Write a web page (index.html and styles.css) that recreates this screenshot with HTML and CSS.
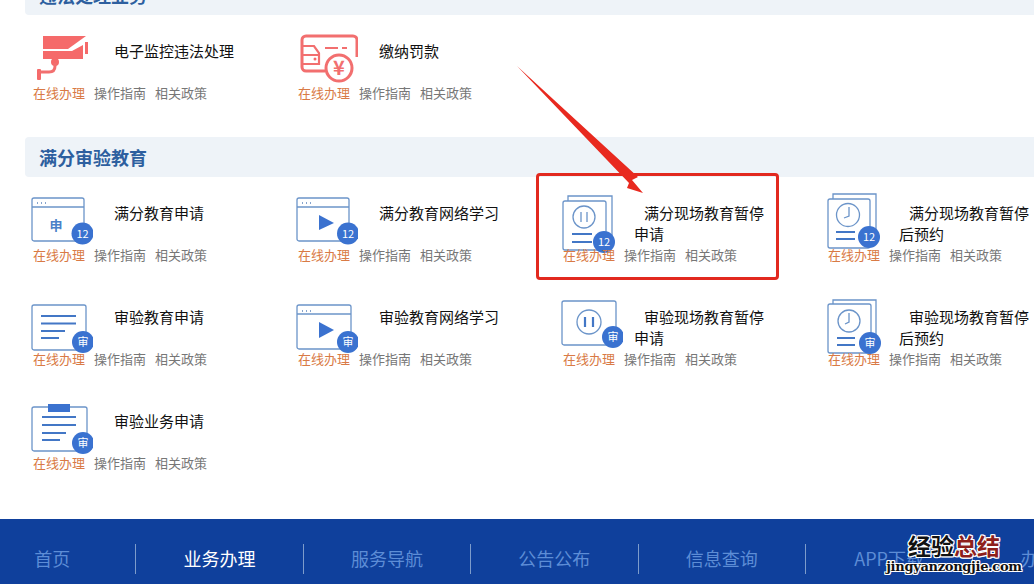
FILE: index.html
```html
<!DOCTYPE html>
<html lang="zh-CN">
<head>
<meta charset="utf-8">
<title>满分审验教育</title>
<link rel="stylesheet" href="styles.css">
</head>
<body>
<div class="page">
  <main class="content">
    <section class="section">
      <h2 class="section-title">违法处理业务</h2>
      <div class="items">
        <article class="item">
          <svg class="icon" viewBox="0 0 63 60">
            <g class="coral">
              <polygon points="13,5 56,5 38,18 13,18"/>
              <polygon points="13,20 42,20 53,14 53,28 13,28"/>
              <rect x="55" y="11" width="3" height="12"/>
              <circle cx="25" cy="31" r="4"/>
              <rect x="7" y="38" width="4" height="11" rx="1"/>
            </g>
            <path class="coral-line" d="M25 32V35Q25 41 19 41H9"/>
          </svg>
          <h3 class="item-title">电子监控违法处理</h3>
          <p class="links"><a class="online">在线办理</a><a>操作指南</a><a>相关政策</a></p>
        </article>
        <article class="item">
          <svg class="icon" viewBox="0 0 63 60">
            <path class="coral-line" d="M30 40H11a4 4 0 0 1-4-4V9a4 4 0 0 1 4-4H58a4 4 0 0 1 4 4V26"/>
            <path class="coral-line thin" d="M8 15H19L24 22V33H8M8 24H24M30 17H43M47 17H52"/>
            <circle class="coral" cx="20" cy="28" r="1.5"/>
            <circle class="coral-line" cx="44" cy="37" r="13"/>
            <text class="yen" x="44" y="44">¥</text>
          </svg>
          <h3 class="item-title">缴纳罚款</h3>
          <p class="links"><a class="online">在线办理</a><a>操作指南</a><a>相关政策</a></p>
        </article>
      </div>
    </section>

    <section class="section">
      <h2 class="section-title">满分审验教育</h2>
      <div class="items">
        <article class="item">
          <svg class="icon" viewBox="0 0 63 60">
            <rect class="line" x="2" y="5" width="52" height="43" rx="2"/>
            <path class="line" d="M2 14H54"/>
            <path class="dots" d="M7 10h1M11 10h1M15 10h1"/>
            <text class="shen" x="26" y="37">申</text>
            <circle class="badge" cx="52.500" cy="40.500" r="11"/>
            <text class="badge-text" x="52.500" y="44.500">12</text>
          </svg>
          <h3 class="item-title">满分教育申请</h3>
          <p class="links"><a class="online">在线办理</a><a>操作指南</a><a>相关政策</a></p>
        </article>
        <article class="item">
          <svg class="icon" viewBox="0 0 63 60">
            <rect class="line" x="2" y="5" width="52" height="43" rx="2"/>
            <path class="line" d="M2 14H54"/>
            <path class="dots" d="M7 10h1M11 10h1M15 10h1"/>
            <polygon class="solid" points="24,22 39,30 24,37"/>
            <circle class="badge" cx="53" cy="40.500" r="11"/>
            <text class="badge-text" x="53" y="44.500">12</text>
          </svg>
          <h3 class="item-title">满分教育网络学习</h3>
          <p class="links"><a class="online">在线办理</a><a>操作指南</a><a>相关政策</a></p>
        </article>
        <article class="item">
          <svg class="icon" viewBox="0 0 63 60">
            <path class="line" d="M8 8V3H52V48H46"/>
            <rect class="line paper" x="3" y="8" width="43" height="49" rx="2"/>
            <circle class="line" cx="24" cy="24" r="11"/>
            <path class="line" d="M21 19V29M27 19V29"/>
            <path class="bars" d="M12 41H32M12 49H32"/>
            <circle class="badge" cx="44" cy="49" r="11"/>
            <text class="badge-text" x="44" y="53">12</text>
          </svg>
          <h3 class="item-title">满分现场教育暂停申请</h3>
          <p class="links"><a class="online">在线办理</a><a>操作指南</a><a>相关政策</a></p>
        </article>
        <article class="item">
          <svg class="icon" viewBox="0 0 63 60">
            <path class="line" d="M8 6V1H51V46H45"/>
            <rect class="line paper" x="3" y="6" width="42" height="49" rx="2"/>
            <circle class="line" cx="23" cy="22" r="11.500"/>
            <path class="line" d="M24 14V23L19 25"/>
            <path class="bars" d="M11 39H30M11 46H30"/>
            <circle class="badge" cx="44" cy="44" r="11"/>
            <text class="badge-text" x="44" y="48">12</text>
          </svg>
          <h3 class="item-title">满分现场教育暂停后预约</h3>
          <p class="links"><a class="online">在线办理</a><a>操作指南</a><a>相关政策</a></p>
        </article>

        <article class="item">
          <svg class="icon" viewBox="0 0 63 60">
            <rect class="line" x="2" y="8" width="54" height="45" rx="2"/>
            <path class="bars" d="M11 19H46M11 26.500H46M11 34H35M11 41H29"/>
            <circle class="badge" cx="53" cy="45" r="11"/>
            <text class="badge-text" x="53" y="49">审</text>
          </svg>
          <h3 class="item-title">审验教育申请</h3>
          <p class="links"><a class="online">在线办理</a><a>操作指南</a><a>相关政策</a></p>
        </article>
        <article class="item">
          <svg class="icon" viewBox="0 0 63 60">
            <rect class="line" x="2" y="8" width="54" height="44" rx="2"/>
            <path class="line" d="M2 17H56"/>
            <path class="dots" d="M7 14h1M11 14h1M15 14h1"/>
            <polygon class="solid" points="24,25 39,33 24,41"/>
            <circle class="badge" cx="53" cy="45" r="11"/>
            <text class="badge-text" x="53" y="49">审</text>
          </svg>
          <h3 class="item-title">审验教育网络学习</h3>
          <p class="links"><a class="online">在线办理</a><a>操作指南</a><a>相关政策</a></p>
        </article>
        <article class="item">
          <svg class="icon" viewBox="0 0 63 60">
            <rect class="line" x="2" y="4" width="54" height="44" rx="2"/>
            <circle class="line" cx="29" cy="25" r="12"/>
            <path class="bars" d="M25 20V30M33 20V30"/>
            <circle class="badge" cx="53" cy="40" r="11"/>
            <text class="badge-text" x="53" y="44">审</text>
          </svg>
          <h3 class="item-title">审验现场教育暂停申请</h3>
          <p class="links"><a class="online">在线办理</a><a>操作指南</a><a>相关政策</a></p>
        </article>
        <article class="item">
          <svg class="icon" viewBox="0 0 63 60">
            <path class="line" d="M8 7V3H51V48H46"/>
            <rect class="line paper" x="3" y="7" width="43" height="49" rx="2"/>
            <circle class="line" cx="24" cy="24" r="11"/>
            <path class="line" d="M24 16V25L20 27"/>
            <path class="bars" d="M12 41H30M12 48H30"/>
            <circle class="badge" cx="45" cy="46" r="11"/>
            <text class="badge-text" x="45" y="50">审</text>
          </svg>
          <h3 class="item-title">审验现场教育暂停后预约</h3>
          <p class="links"><a class="online">在线办理</a><a>操作指南</a><a>相关政策</a></p>
        </article>

        <article class="item">
          <svg class="icon" viewBox="0 0 63 60">
            <rect class="line" x="2" y="6" width="55" height="44" rx="2"/>
            <rect class="solid" x="18" y="3" width="22" height="8"/>
            <path class="bars" d="M12 16H46M12 24H46M12 32H36M12 39H30"/>
            <circle class="badge" cx="53" cy="42" r="11"/>
            <text class="badge-text" x="53" y="46">审</text>
          </svg>
          <h3 class="item-title">审验业务申请</h3>
          <p class="links"><a class="online">在线办理</a><a>操作指南</a><a>相关政策</a></p>
        </article>
      </div>
    </section>
  </main>

  <footer class="footer">
    <nav class="nav">
      <a class="nav-item">首页</a>
      <a class="nav-item active">业务办理</a>
      <a class="nav-item">服务导航</a>
      <a class="nav-item">公告公布</a>
      <a class="nav-item">信息查询</a>
      <a class="nav-item">APP下载</a>
      <a class="nav-item">办事指南</a>
    </nav>
  </footer>

  <div class="callout-box"></div>
  <svg class="callout-arrow" viewBox="0 0 140 140">
    <polygon points="2,1 123,112 117,115 128,128 112,123 114,118"/>
  </svg>
  <div class="watermark">
    <div class="wm-cn"><span>经验</span><span class="wm-red">总结</span></div>
    <div class="wm-en">jingyanzongjie.com</div>
  </div>
</div>
</body>
</html>
```
FILE: styles.css
```css
html, body {
  margin: 0;
  height: 584px;
  overflow: hidden;
  background: #fff;
}
.page {
  position: relative;
  height: 584px;
  overflow: hidden;
  font-family: "Noto Sans CJK SC", "Liberation Sans", sans-serif;
}
.content {
  margin-top: -25px;
  padding-left: 25px;
}
.section {
  margin-bottom: 34px;
}
.section:last-child {
  margin-bottom: 46px;
}
.section-title {
  margin: 0;
  height: 40px;
  padding-left: 14px;
  font-size: 18px;
  font-weight: 700;
  line-height: 40px;
  color: #2d5f9f;
  background: #eef3f8;
  border-radius: 4px 0 0 4px;
}
.items {
  display: grid;
  grid-template-columns: repeat(4, 265px);
  row-gap: 42px;
  padding: 26px 0 0 7px;
}
.item {
  display: grid;
  grid-template-columns: 72px 135px;
  grid-template-rows: 42px 20px;
}
.icon {
  grid-column: 1;
  grid-row: 1;
  width: 63px;
  height: 60px;
  margin: -10px 0 0 -2px;
  z-index: 1;
}
.item-title {
  grid-column: 2;
  grid-row: 1;
  margin: -1px 0 0;
  font-size: 15px;
  font-weight: 400;
  line-height: 21px;
  text-indent: 10px;
  color: #111;
}
.links {
  grid-column: 1 / -1;
  grid-row: 2;
  display: flex;
  gap: 9px;
  margin: 0 0 0 1px;
  font-size: 13px;
  line-height: 20px;
  color: #777;
  white-space: nowrap;
  z-index: 2;
}
.online {
  color: #d97a45;
}

/* icon parts */
.coral { fill: #f56a6a; }
.coral-line {
  fill: none;
  stroke: #f26f6f;
  stroke-width: 3;
}
.coral-line.thin { stroke-width: 2.2; }
.yen {
  fill: #f26f6f;
  font-size: 20px;
  font-weight: 700;
  text-anchor: middle;
}
.line {
  fill: none;
  stroke: #6b94c9;
  stroke-width: 1.3;
}
.paper { fill: #fff; }
.dots {
  fill: none;
  stroke: #5f86bd;
  stroke-width: 1.6;
}
.bars {
  fill: none;
  stroke: #4377c6;
  stroke-width: 2.2;
}
.solid { fill: #3b72cf; }
.shen {
  fill: #4a80c8;
  font-size: 13px;
  font-weight: 700;
  text-anchor: middle;
}
.badge { fill: #3a72d0; }
.badge-text {
  fill: #fff;
  font-size: 11px;
  text-anchor: middle;
}

/* footer */
.footer {
  height: 65px;
  padding-top: 25px;
  box-sizing: border-box;
  background: #0f409c;
}
.nav {
  display: flex;
  margin-left: -31px;
}
.nav-item {
  flex: 0 0 167.400px;
  box-sizing: border-box;
  height: 30px;
  border-right: 1px solid #7d9ccb;
  font-size: 18px;
  line-height: 28px;
  text-align: center;
  white-space: nowrap;
  color: #5d8dd6;
}
.nav-item.active { color: #fff; }

/* overlays */
.callout-box {
  position: absolute;
  left: 536px;
  top: 173px;
  width: 243px;
  height: 107px;
  box-sizing: border-box;
  border: 3px solid #e2291f;
  border-radius: 4px;
}
.callout-arrow {
  position: absolute;
  left: 515px;
  top: 65px;
  width: 140px;
  height: 140px;
  fill: #e8291f;
}
.watermark {
  position: absolute;
  left: 884px;
  top: 531px;
  width: 140px;
  text-align: center;
  font-weight: 700;
  color: #111;
  text-shadow: 1px 0 0 #fff, -1px 0 0 #fff, 0 1px 0 #fff, 0 -1px 0 #fff, 1px 1px 0 #fff, -1px -1px 0 #fff, 1px -1px 0 #fff, -1px 1px 0 #fff;
}
.wm-cn {
  font-size: 23px;
  line-height: 28px;
}
.wm-red { color: #8e1f1c; }
.wm-en {
  font-family: "DejaVu Serif", serif;
  font-size: 13px;
  line-height: 16px;
  letter-spacing: -0.300px;
}
```
